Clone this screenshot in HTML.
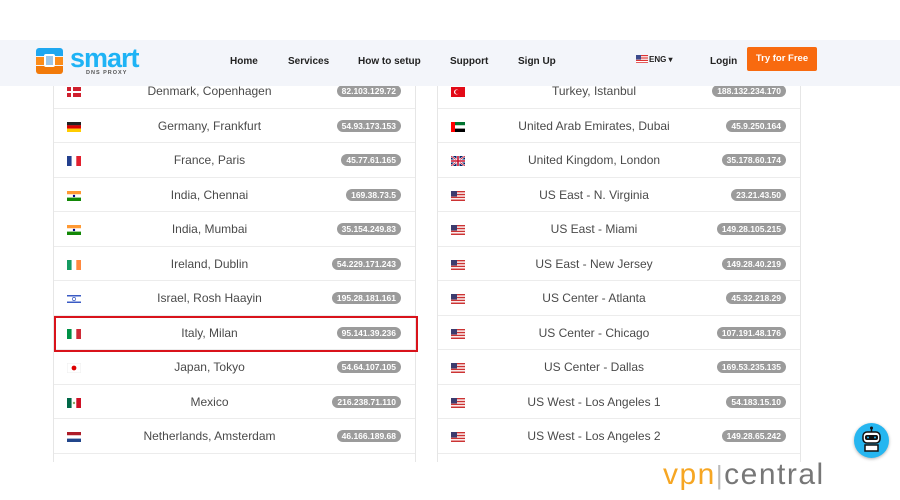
<!DOCTYPE html>
<html><head><meta charset="utf-8">
<style>
*{margin:0;padding:0;box-sizing:border-box}
body{width:900px;height:500px;background:#fff;font-family:"Liberation Sans",sans-serif;position:relative;overflow:hidden}
.nav{position:absolute;left:0;top:40px;width:900px;height:46px;background:#f3f5fa;z-index:5}
.nav a{position:absolute;top:16px;font-size:10px;font-weight:bold;color:#222;text-decoration:none}
.try{position:absolute;left:747px;top:47px;width:70px;height:24px;background:#f86a0f;color:#fff;font-size:9.5px;font-weight:bold;text-align:center;line-height:24px;border-radius:2px;z-index:6}
.tbl{position:absolute;top:74px;border:1px solid #e6e6e6;border-top:none;border-bottom:none;height:388px}
.row{position:relative;height:34.5px;border-bottom:1.5px solid #ececec}
.row .t{position:absolute;left:0;right:50px;text-align:center;top:10px;font-size:12px;color:#4a4a4a}
.row .p{position:absolute;right:14px;top:11px;height:12px;line-height:12px;padding:0 5px;background:#9b9b9b;border-radius:6px;color:#fff;font-size:8.5px;font-weight:bold}
.row svg{position:absolute;left:13px;top:13px}
</style></head><body>
<div class="nav">
 <div style="position:absolute;left:36px;top:8px;width:27px;height:26px">
  <div style="position:absolute;left:0;top:0;width:27px;height:8px;background:#1ea7f0;border-radius:3px 3px 0 0"></div>
  <div style="position:absolute;left:0;top:9px;width:27px;height:8px;background:#fb8c1a"></div>
  <div style="position:absolute;left:0;top:18px;width:27px;height:8px;background:#f27a0a;border-radius:0 0 3px 3px"></div>
  <div style="position:absolute;left:8px;top:6px;width:11px;height:13px;border:2px solid #fff;border-radius:2px;background:#9cc7ea"></div>
 </div>
 <div style="position:absolute;left:70px;top:3px;font-size:27px;font-weight:bold;color:#1eb3f5;letter-spacing:-1px;line-height:30px">smart</div>
 <div style="position:absolute;left:86px;top:30px;font-size:5.5px;font-weight:bold;color:#555;letter-spacing:1px">DNS PROXY</div>
 <a style="left:230px">Home</a>
 <a style="left:288px">Services</a>
 <a style="left:358px">How to setup</a>
 <a style="left:450px">Support</a>
 <a style="left:518px">Sign Up</a>
 <svg style="position:absolute;left:636px;top:15px" width="12" height="8"><rect width="12" height="8" fill="#d33"/><rect y="1.2" width="12" height="1.2" fill="#fff"/><rect y="3.6" width="12" height="1.2" fill="#fff"/><rect y="6" width="12" height="1.2" fill="#fff"/><rect width="5" height="4.5" fill="#3b4a8c"/></svg>
 <a style="left:649px;font-size:8px;top:15px">ENG ▾</a>
 <a style="left:710px">Login</a>
</div>
<div class="try">Try for Free</div>

<div class="tbl" style="left:53px;width:363px" id="L"></div>
<div class="tbl" style="left:437px;width:364px" id="R"></div>
<div style="position:absolute;left:54px;top:316px;width:364px;height:36px;border:2px solid #d9131b;z-index:4"></div>

<div style="position:absolute;left:854px;top:423px;width:35px;height:35px;border-radius:50%;background:#26b6f0;box-shadow:0 1px 3px rgba(0,0,0,.3)">
 <svg width="35" height="35" viewBox="0 0 35 35"><line x1="17.5" y1="5" x2="17.5" y2="9" stroke="#111" stroke-width="1.5"/><circle cx="17.5" cy="5" r="1.5" fill="#111"/><rect x="9" y="9" width="17" height="11" rx="4" fill="#fff" stroke="#111" stroke-width="1.5"/><rect x="11" y="12" width="13" height="5" rx="2" fill="#111"/><circle cx="14" cy="14.5" r="1" fill="#26b6f0"/><circle cx="21" cy="14.5" r="1" fill="#26b6f0"/><path d="M11 22h13v6h-13z" fill="#fff" stroke="#111" stroke-width="1.5"/></svg>
</div>
<div style="position:absolute;left:663px;top:458px;font-size:30px;line-height:34px;letter-spacing:1.5px"><span style="color:#f6a623">vpn</span><span style="color:#bbb;font-size:26px">|</span><span style="color:#777">central</span></div>

<script>
function fl(c){
 var s='<svg width="14" height="10">';
 switch(c){
 case'dk':s+='<rect width="14" height="10" fill="#d0202e"/><rect x="4" width="2" height="10" fill="#fff"/><rect y="4" width="14" height="2" fill="#fff"/>';break;
 case'de':s+='<rect width="14" height="3.4" fill="#222"/><rect y="3.3" width="14" height="3.4" fill="#d00"/><rect y="6.6" width="14" height="3.4" fill="#fc0"/>';break;
 case'fr':s+='<rect width="4.7" height="10" fill="#23408e"/><rect x="4.7" width="4.7" height="10" fill="#fff"/><rect x="9.3" width="4.7" height="10" fill="#e2202e"/>';break;
 case'in':s+='<rect width="14" height="3.4" fill="#f93"/><rect y="3.3" width="14" height="3.4" fill="#fff"/><rect y="6.6" width="14" height="3.4" fill="#128807"/><circle cx="7" cy="5" r="1.2" fill="#008"/>';break;
 case'ie':s+='<rect width="4.7" height="10" fill="#169b62"/><rect x="4.7" width="4.7" height="10" fill="#fff"/><rect x="9.3" width="4.7" height="10" fill="#ff883e"/>';break;
 case'il':s+='<rect width="14" height="10" fill="#fff"/><rect y="1" width="14" height="1.5" fill="#3a5bc4"/><rect y="7.5" width="14" height="1.5" fill="#3a5bc4"/><circle cx="7" cy="5" r="1.6" fill="none" stroke="#3a5bc4" stroke-width=".7"/>';break;
 case'it':s+='<rect width="4.7" height="10" fill="#009246"/><rect x="4.7" width="4.7" height="10" fill="#fff"/><rect x="9.3" width="4.7" height="10" fill="#ce2b37"/>';break;
 case'jp':s+='<rect width="14" height="10" fill="#fff" stroke="#eee"/><circle cx="7" cy="5" r="2.4" fill="#d00"/>';break;
 case'mx':s+='<rect width="4.7" height="10" fill="#006847"/><rect x="4.7" width="4.7" height="10" fill="#fff"/><rect x="9.3" width="4.7" height="10" fill="#ce1126"/><circle cx="7" cy="5" r="1.2" fill="#8a6"/>';break;
 case'nl':s+='<rect width="14" height="3.4" fill="#ae1c28"/><rect y="3.3" width="14" height="3.4" fill="#fff"/><rect y="6.6" width="14" height="3.4" fill="#21468b"/>';break;
 case'tr':s+='<rect width="14" height="10" fill="#e30a17"/><circle cx="5.5" cy="5" r="2.5" fill="#fff"/><circle cx="6.2" cy="5" r="2" fill="#e30a17"/>';break;
 case'ae':s+='<rect width="14" height="3.4" fill="#00732f"/><rect y="3.3" width="14" height="3.4" fill="#fff"/><rect y="6.6" width="14" height="3.4" fill="#000"/><rect width="4" height="10" fill="#f00"/>';break;
 case'gb':s+='<rect width="14" height="10" fill="#012169"/><path d="M0 0L14 10M14 0L0 10" stroke="#fff" stroke-width="2"/><path d="M0 0L14 10M14 0L0 10" stroke="#c8102e" stroke-width=".8"/><path d="M7 0v10M0 5h14" stroke="#fff" stroke-width="3"/><path d="M7 0v10M0 5h14" stroke="#c8102e" stroke-width="1.6"/>';break;
 case'us':s+='<rect width="14" height="10" fill="#c33"/><rect y="1.4" width="14" height="1.4" fill="#fff"/><rect y="4.3" width="14" height="1.4" fill="#fff"/><rect y="7.1" width="14" height="1.4" fill="#fff"/><rect width="6" height="5.5" fill="#3c3b6e"/>';break;
 }
 return s+'</svg>';
}
var L=[['dk','Denmark, Copenhagen','82.103.129.72'],['de','Germany, Frankfurt','54.93.173.153'],['fr','France, Paris','45.77.61.165'],['in','India, Chennai','169.38.73.5'],['in','India, Mumbai','35.154.249.83'],['ie','Ireland, Dublin','54.229.171.243'],['il','Israel, Rosh Haayin','195.28.181.161'],['it','Italy, Milan','95.141.39.236'],['jp','Japan, Tokyo','54.64.107.105'],['mx','Mexico','216.238.71.110'],['nl','Netherlands, Amsterdam','46.166.189.68']];
var R=[['tr','Turkey, Istanbul','188.132.234.170'],['ae','United Arab Emirates, Dubai','45.9.250.164'],['gb','United Kingdom, London','35.178.60.174'],['us','US East - N. Virginia','23.21.43.50'],['us','US East - Miami','149.28.105.215'],['us','US East - New Jersey','149.28.40.219'],['us','US Center - Atlanta','45.32.218.29'],['us','US Center - Chicago','107.191.48.176'],['us','US Center - Dallas','169.53.235.135'],['us','US West - Los Angeles 1','54.183.15.10'],['us','US West - Los Angeles 2','149.28.65.242']];
function b(id,a){var h='';a.forEach(function(r){h+='<div class="row">'+fl(r[0])+'<div class="t">'+r[1]+'</div><div class="p">'+r[2]+'</div></div>'});document.getElementById(id).innerHTML=h}
b('L',L);b('R',R);
</script>
</body></html>
